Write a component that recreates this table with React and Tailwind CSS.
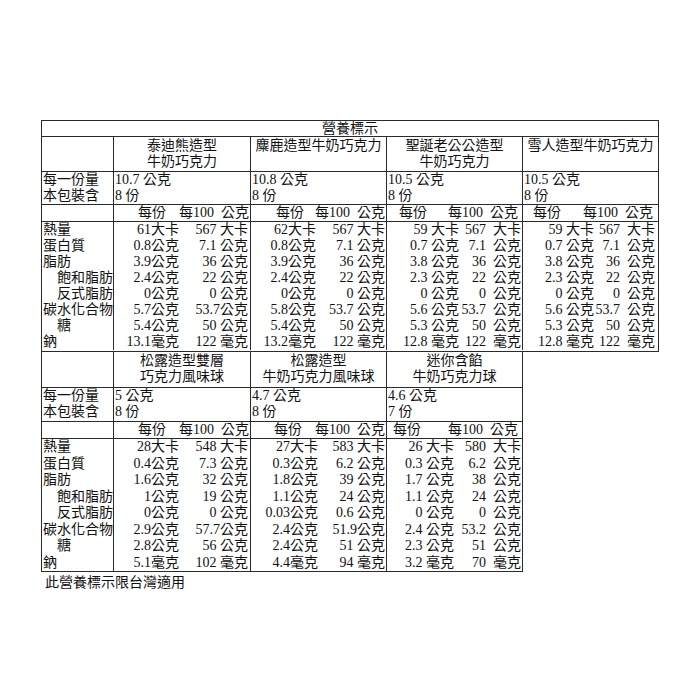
import React from "react";

const E = "\u2002";

const labels = [
  { text: "熱量" },
  { text: "蛋白質" },
  { text: "脂肪" },
  { text: "飽和脂肪", indent: true },
  { text: "反式脂肪", indent: true },
  { text: "碳水化合物" },
  { text: "糖", indent: true },
  { text: "鈉" },
];

const firstTable = {
  cols: "grid-cols-[71px_137px_136px_136px_136px]",
  width: "w-[618px] border-t",
  headH: "h-[35px]",
  sizeH: "h-[33px]",
  lineH: "h-[16px] leading-[16px]",
  dataPad: "pb-[1px]",
  products: [
    {
      name: ["泰迪熊造型", "牛奶巧克力"],
      size: "10.7 公克",
      count: "8 份",
      split: "w-[65px]",
      head: "pl-[24px] pr-[1px]",
      end: "pr-[2px]",
      rows: [
        ["61大卡", "567 大卡"],
        ["0.8公克", "7.1 公克"],
        ["3.9公克", "36 公克"],
        ["2.4公克", "22 公克"],
        ["0公克", "0 公克"],
        ["5.7公克", "53.7公克"],
        ["5.4公克", "50 公克"],
        ["13.1毫克", "122 毫克"],
      ],
    },
    {
      name: ["麋鹿造型牛奶巧克力"],
      size: "10.8 公克",
      count: "8 份",
      split: "w-[65px]",
      head: "pl-[25px] pr-[1px]",
      end: "pr-[1px]",
      rows: [
        ["62大卡", "567 大卡"],
        ["0.8公克", "7.1 公克"],
        ["3.9公克", "36 公克"],
        ["2.4公克", "22 公克"],
        ["0公克", "0 公克"],
        ["5.8公克", "53.7 公克"],
        ["5.4公克", "50 公克"],
        ["13.2毫克", "122 毫克"],
      ],
    },
    {
      name: ["聖誕老公公造型", "牛奶巧克力"],
      size: "10.5 公克",
      count: "8 份",
      split: "w-[72px]",
      head: "pl-[12px] pr-[4px]",
      end: "pr-[1px]",
      rows: [
        ["59 大卡", `567${E}大卡`],
        ["0.7 公克", `7.1${E}公克`],
        ["3.8 公克", `36${E}公克`],
        ["2.3 公克", `22${E}公克`],
        ["0 公克", `0${E}公克`],
        ["5.6 公克", `53.7${E}公克`],
        ["5.3 公克", `50${E}公克`],
        ["12.8 毫克", `122${E}毫克`],
      ],
    },
    {
      name: ["雪人造型牛奶巧克力"],
      size: "10.5 公克",
      count: "8 份",
      split: "w-[71px]",
      head: "pl-[10px] pr-[5px]",
      end: "pr-[3px]",
      rows: [
        ["59 大卡", `567${E}大卡`],
        ["0.7 公克", `7.1${E}公克`],
        ["3.8 公克", `36${E}公克`],
        ["2.3 公克", `22${E}公克`],
        ["0 公克", `0${E}公克`],
        ["5.6 公克", `53.7${E}公克`],
        ["5.3 公克", `50${E}公克`],
        ["12.8 毫克", `122${E}毫克`],
      ],
    },
  ],
};

const secondTable = {
  cols: "grid-cols-[71px_137px_136px_136px]",
  width: "w-[482px] border-t-0",
  headH: "h-[36px]",
  sizeH: "h-[34px]",
  lineH: "h-[16.5px] leading-[16.5px]",
  dataPad: "",
  products: [
    {
      name: ["松露造型雙層", "巧克力風味球"],
      size: "5 公克",
      count: "8 份",
      split: "w-[65px]",
      head: "pl-[24px] pr-[1px]",
      end: "pr-[2px]",
      rows: [
        ["28大卡", "548 大卡"],
        ["0.4公克", "7.3 公克"],
        ["1.6公克", "32 公克"],
        ["1公克", "19 公克"],
        ["0公克", "0 公克"],
        ["2.9公克", "57.7公克"],
        ["2.8公克", "56 公克"],
        ["5.1毫克", "102 毫克"],
      ],
    },
    {
      name: ["松露造型", "牛奶巧克力風味球"],
      size: "4.7 公克",
      count: "8 份",
      split: "w-[67px]",
      head: "pl-[23px] pr-[1px]",
      end: "pr-[1px]",
      rows: [
        ["27大卡", "583 大卡"],
        ["0.3公克", "6.2 公克"],
        ["1.8公克", "39 公克"],
        ["1.1公克", "24 公克"],
        ["0.03公克", "0.6 公克"],
        ["2.4公克", "51.9公克"],
        ["2.4公克", "51 公克"],
        ["4.4毫克", "94 毫克"],
      ],
    },
    {
      name: ["迷你含餡", "牛奶巧克力球"],
      size: "4.6 公克",
      count: "7 份",
      split: "w-[67px]",
      head: "pl-[6px] pr-[4px]",
      end: "pr-[1px]",
      rows: [
        ["26 大卡", `580${E}大卡`],
        ["0.3 公克", `6.2${E}公克`],
        ["1.7 公克", `38${E}公克`],
        ["1.1 公克", `24${E}公克`],
        ["0 公克", `0${E}公克`],
        ["2.4 公克", `53.2${E}公克`],
        ["2.3 公克", `51${E}公克`],
        ["3.2 毫克", `70${E}毫克`],
      ],
    },
  ],
};

function NutritionBlock({ table, title }) {
  const { cols, width, headH, sizeH, lineH, dataPad, products } = table;

  return (
    <div className={`${width} border-x border-b border-[#2a2a2a]`}>
      {title && (
        <div className="h-[16px] border-b border-[#2a2a2a] text-center leading-[15px]">{title}</div>
      )}

      <div className={`grid ${cols} ${headH} border-b border-[#2a2a2a]`}>
        <div />
        {products.map((product) => (
          <div key={product.size + product.name[0]} className="border-l border-[#2a2a2a] pt-[1px] text-center leading-[16px]">
            {product.name.map((line) => (
              <div key={line}>{line}</div>
            ))}
          </div>
        ))}
      </div>

      <div className={`grid ${cols} ${sizeH} border-b border-[#2a2a2a]`}>
        <div className="pl-[1px] leading-[16px]">
          <div>每一份量</div>
          <div>本包裝含</div>
        </div>
        {products.map((product) => (
          <div key={product.name[0]} className="whitespace-pre border-l border-[#2a2a2a] pl-[1px] leading-[16px]">
            <div>{product.size}</div>
            <div>{product.count}</div>
          </div>
        ))}
      </div>

      <div className={`grid ${cols} h-[17px] border-b border-[#2a2a2a]`}>
        <div />
        {products.map((product) => (
          <div
            key={product.name[0]}
            className={`flex items-center justify-between whitespace-pre border-l border-[#2a2a2a] leading-[16px] ${product.head}`}
          >
            <span>每份</span>
            <span>{`每100${E}公克`}</span>
          </div>
        ))}
      </div>

      <div className={`grid ${cols} ${dataPad}`}>
        <div className="pl-[1px]">
          {labels.map((label) => (
            <div key={label.text} className={`${lineH} ${label.indent ? "pl-[14px]" : ""}`}>
              {label.text}
            </div>
          ))}
        </div>
        {products.map((product) => (
          <div key={product.name[0]} className="border-l border-[#2a2a2a]">
            {product.rows.map(([serving, per100], index) => (
              <div key={index} className={`flex whitespace-pre ${lineH}`}>
                <span className={`${product.split} shrink-0 text-right`}>{serving}</span>
                <span className={`flex-1 text-right ${product.end}`}>{per100}</span>
              </div>
            ))}
          </div>
        ))}
      </div>
    </div>
  );
}

export default function App() {
  return (
    <div className="min-h-screen bg-white pl-[41px] pt-[120px] font-['Liberation_Serif','Noto_Sans_CJK_TC',serif] text-[14px] text-[#111]">
      <NutritionBlock table={firstTable} title="營養標示" />
      <NutritionBlock table={secondTable} />
      <p className="mt-[3px] pl-[4px] leading-[16px]">此營養標示限台灣適用</p>
    </div>
  );
}
